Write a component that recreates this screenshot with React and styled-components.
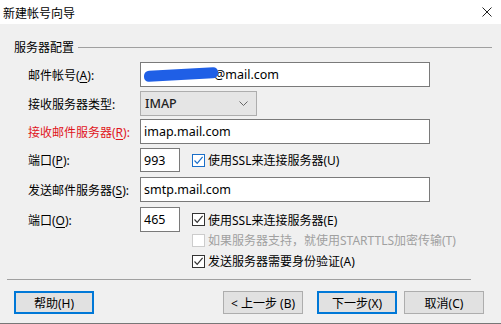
import styled, { createGlobalStyle } from "styled-components";

const Global = createGlobalStyle`
  html, body { margin: 0; padding: 0; background: #f0f0f0; }
  body {
    font-family: "Noto Sans", "Noto Sans CJK SC", sans-serif;
    font-size: 12px;
    color: #000;
  }
`;

export default function App() {
  return (
    <>
      <Global />
      <Window>
        <TitleBar>
          <span>新建帐号向导</span>
          <svg width="10" height="10" viewBox="0 0 10 10">
            <path d="M0.5 0.5 L9.5 9.5 M9.5 0.5 L0.5 9.5" stroke="#222" strokeWidth="1" />
          </svg>
        </TitleBar>

        <Body>
          <GroupHeader>
            <span>服务器配置</span>
            <GroupLine />
          </GroupHeader>

          <Row $mt={8}>
            <Label>邮件帐号(<u>A</u>):</Label>
            <TextBox $w={290}>
              <Scribble />@mail.com
            </TextBox>
          </Row>

          <Row $mt={4}>
            <Label>接收服务器类型:</Label>
            <Select>
              <span>IMAP</span>
              <svg width="9" height="6" viewBox="0 0 9 6">
                <path d="M0.5 0.5 L4.5 4.5 L8.5 0.5" stroke="#666" fill="none" />
              </svg>
            </Select>
          </Row>

          <Row $mt={3}>
            <Label $red>接收邮件服务器(<u>R</u>):</Label>
            <TextBox $w={290}>imap.mail.com</TextBox>
          </Row>

          <Row $mt={4} $h={24}>
            <Label>端口(<u>P</u>):</Label>
            <TextBox $w={40}>993</TextBox>
            <Check $on $active>使用SSL来连接服务器(U)</Check>
          </Row>

          <Row $mt={5}>
            <Label>发送邮件服务器(<u>S</u>):</Label>
            <TextBox $w={290}>smtp.mail.com</TextBox>
          </Row>

          <Row $mt={5}>
            <Label>端口(<u>O</u>):</Label>
            <TextBox $w={40}>465</TextBox>
            <Check $on>使用SSL来连接服务器(E)</Check>
          </Row>

          <OptionRow $mt={0}>
            <Check $disabled>如果服务器支持，就使用STARTTLS加密传输(T)</Check>
          </OptionRow>
          <OptionRow $mt={5}>
            <Check $on>发送服务器需要身份验证(A)</Check>
          </OptionRow>
        </Body>

        <Separator />

        <Buttons>
          <Button $default>帮助(H)</Button>
          <Spacer />
          <Button>&lt; 上一步 (B)</Button>
          <Button $default $ml={14}>下一步(X)</Button>
          <Button $ml={7}>取消(C)</Button>
        </Buttons>
      </Window>
    </>
  );
}

function Check({ children, $on, $disabled, $active }) {
  return (
    <CheckWrap $disabled={$disabled}>
      <Box $disabled={$disabled} $active={$active}>
        {$on && (
          <svg width="11" height="11" viewBox="0 0 11 11">
            <path
              d="M1.5 5.5 L4.2 8.3 L9.6 1.8"
              stroke={$active ? "#1a6fc9" : "#333"}
              strokeWidth="1.2"
              fill="none"
            />
          </svg>
        )}
      </Box>
      <span>{children}</span>
    </CheckWrap>
  );
}

const Window = styled.div`
  width: 501px;
  height: 324px;
  background: #f0f0f0;
  display: flex;
  flex-direction: column;
  overflow: hidden;
  border-bottom: 1px solid #777;
  box-sizing: border-box;
`;

const TitleBar = styled.div`
  height: 24px;
  background: #fff;
  display: flex;
  align-items: center;
  justify-content: space-between;
  padding: 0 9px 0 3px;
  font-family: "Noto Sans CJK SC", sans-serif;
  font-size: 12px;
`;

const Body = styled.div`
  display: flex;
  flex-direction: column;
  padding: 0 0 0 28px;
`;

const GroupHeader = styled.div`
  display: flex;
  align-items: center;
  height: 14px;
  margin: 16px 9px 0 -14px;
  gap: 4px;
  font-family: "Noto Sans CJK SC", sans-serif;
  line-height: 14px;
`;

const GroupLine = styled.div`
  flex: 1;
  height: 1px;
  background: #a0a0a0;
`;

const Row = styled.div`
  display: flex;
  align-items: center;
  height: ${(p) => p.$h || 25}px;
  margin-top: ${(p) => p.$mt}px;
`;

const OptionRow = styled.div`
  display: flex;
  align-items: center;
  height: 16px;
  margin-top: ${(p) => p.$mt}px;
  padding-left: 152px;
`;

const Label = styled.div`
  width: 112px;
  flex-shrink: 0;
  color: ${(p) => (p.$red ? "#e0161c" : "#000")};
  white-space: nowrap;
  u { text-underline-offset: 2px; }
`;

const TextBox = styled.div`
  width: ${(p) => p.$w}px;
  height: 100%;
  box-sizing: border-box;
  border: 1px solid #7a7a7a;
  background: #fff;
  display: flex;
  align-items: center;
  padding-left: 3px;
  font-size: 12.5px;
  white-space: nowrap;
  overflow: hidden;
`;

const Scribble = styled.span`
  display: inline-block;
  width: 74px;
  height: 11px;
  margin-right: -4px;
  border-radius: 5px;
  background: #1f5fe6;
  position: relative;
  z-index: 1;
  transform: skewY(-3deg);
`;

const Select = styled.div`
  width: 117px;
  height: 100%;
  box-sizing: border-box;
  border: 1px solid #adadad;
  background: #e5e5e5;
  display: flex;
  align-items: center;
  justify-content: space-between;
  padding: 0 8px 0 4px;
  font-size: 12.5px;
  font-weight: 500;
  color: #222;
`;

const CheckWrap = styled.label`
  display: flex;
  align-items: center;
  gap: 3px;
  margin-left: 12px;
  color: ${(p) => (p.$disabled ? "#a0a0a0" : "#000")};
  white-space: nowrap;
`;

const Box = styled.span`
  width: 13px;
  height: 13px;
  box-sizing: border-box;
  border: 1px solid
    ${(p) => (p.$disabled ? "#cccccc" : p.$active ? "#1a6fc9" : "#333")};
  background: #fff;
  display: flex;
  align-items: center;
  justify-content: center;
`;

const Separator = styled.div`
  height: 1px;
  background: #a0a0a0;
  margin: 10px 30px 0 7px;
`;

const Buttons = styled.div`
  display: flex;
  align-items: center;
  margin: 11px 17px 0 14px;
`;

const Spacer = styled.div`
  flex: 1;
`;

const Button = styled.div`
  width: 80px;
  height: 23px;
  box-sizing: border-box;
  margin-left: ${(p) => p.$ml || 0}px;
  border: ${(p) => (p.$default ? "2px solid #0078d7" : "1px solid #adadad")};
  background: #e1e1e1;
  display: flex;
  align-items: center;
  justify-content: center;
  white-space: nowrap;
`;
